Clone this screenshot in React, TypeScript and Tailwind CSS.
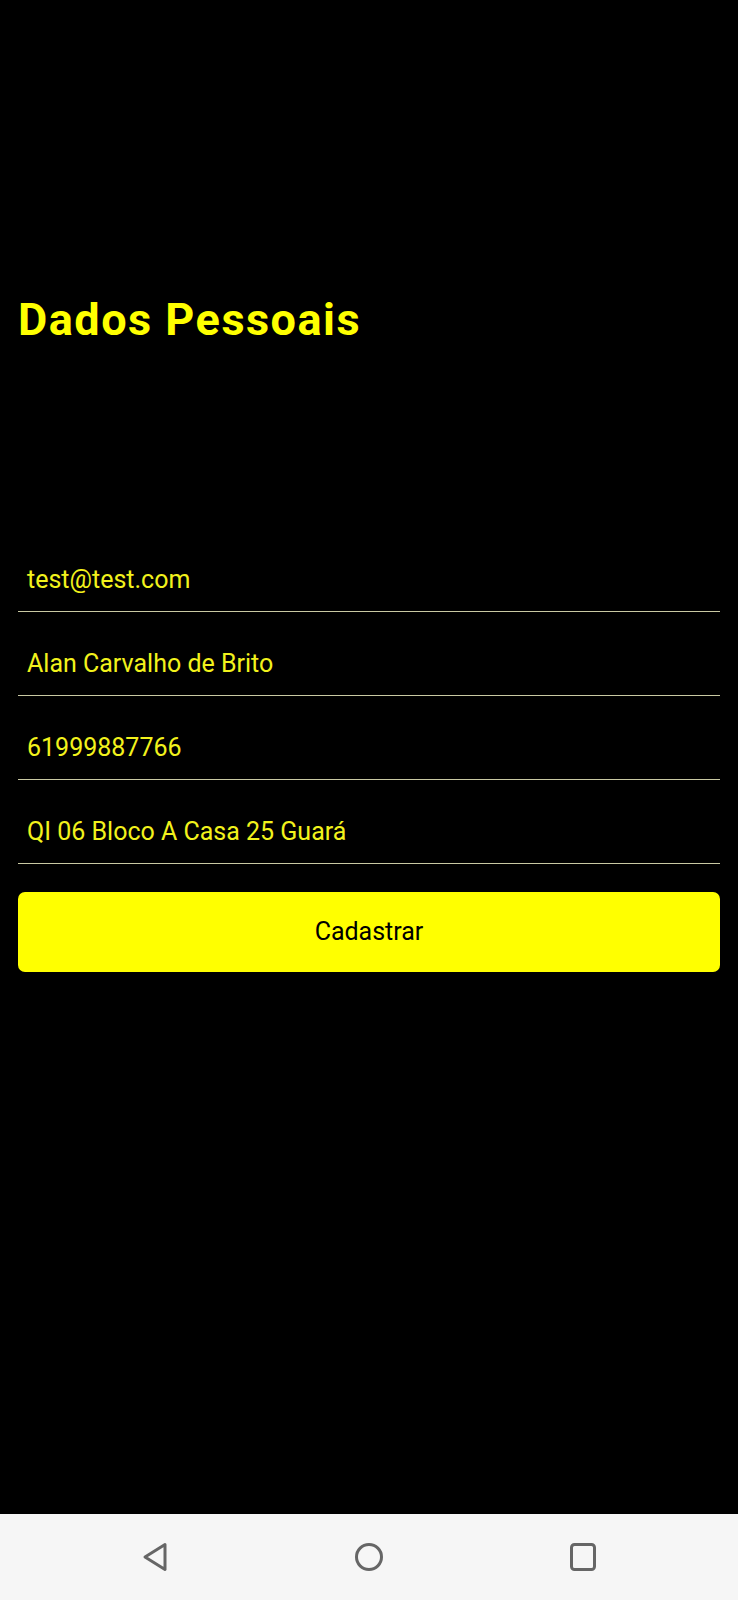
import React from 'react'

const fields = [
  'test@test.com',
  'Alan Carvalho de Brito',
  '61999887766',
  'QI 06 Bloco A Casa 25 Guará',
]

function NavBar() {
  return (
    <div className="h-[86px] bg-[#f6f6f6] flex items-center justify-between px-[141px]">
      {/* back */}
      <svg width="28" height="32" viewBox="0 0 28 32" fill="none">
        <path d="M24 3.5 L4 16 L24 28.5 Z" stroke="#666" strokeWidth="3" strokeLinejoin="round" />
      </svg>
      {/* home */}
      <svg width="30" height="30" viewBox="0 0 30 30" fill="none">
        <circle cx="15" cy="15" r="12.5" stroke="#666" strokeWidth="3" />
      </svg>
      {/* recents */}
      <svg width="28" height="30" viewBox="0 0 28 30" fill="none">
        <rect x="2.5" y="2.5" width="23" height="25" rx="3" stroke="#666" strokeWidth="3" />
      </svg>
    </div>
  )
}

export default function App() {
  return (
    <div className="w-[738px] h-[1600px] bg-black flex flex-col" style={{ fontFamily: 'Roboto, "Liberation Sans", sans-serif' }}>
      <div className="flex-1 px-[18px]">
        <h1 className="mt-[297px] text-[45px] leading-none font-bold tracking-[1.5px] text-[#ffff00]">
          Dados Pessoais
        </h1>

        <div className="mt-[186px]">
          {fields.map((value) => (
            <div
              key={value}
              className="h-[84px] border-b border-[#c9c9a3] flex items-end pb-[17px] pl-[9px]"
            >
              <span className="text-[25px] leading-[28px] text-[#f2f21c]">{value}</span>
            </div>
          ))}
        </div>

        <button className="mt-[28px] w-full h-[80px] rounded-[7px] bg-[#ffff00] text-black text-[25px]">
          Cadastrar
        </button>
      </div>

      <NavBar />
    </div>
  )
}
